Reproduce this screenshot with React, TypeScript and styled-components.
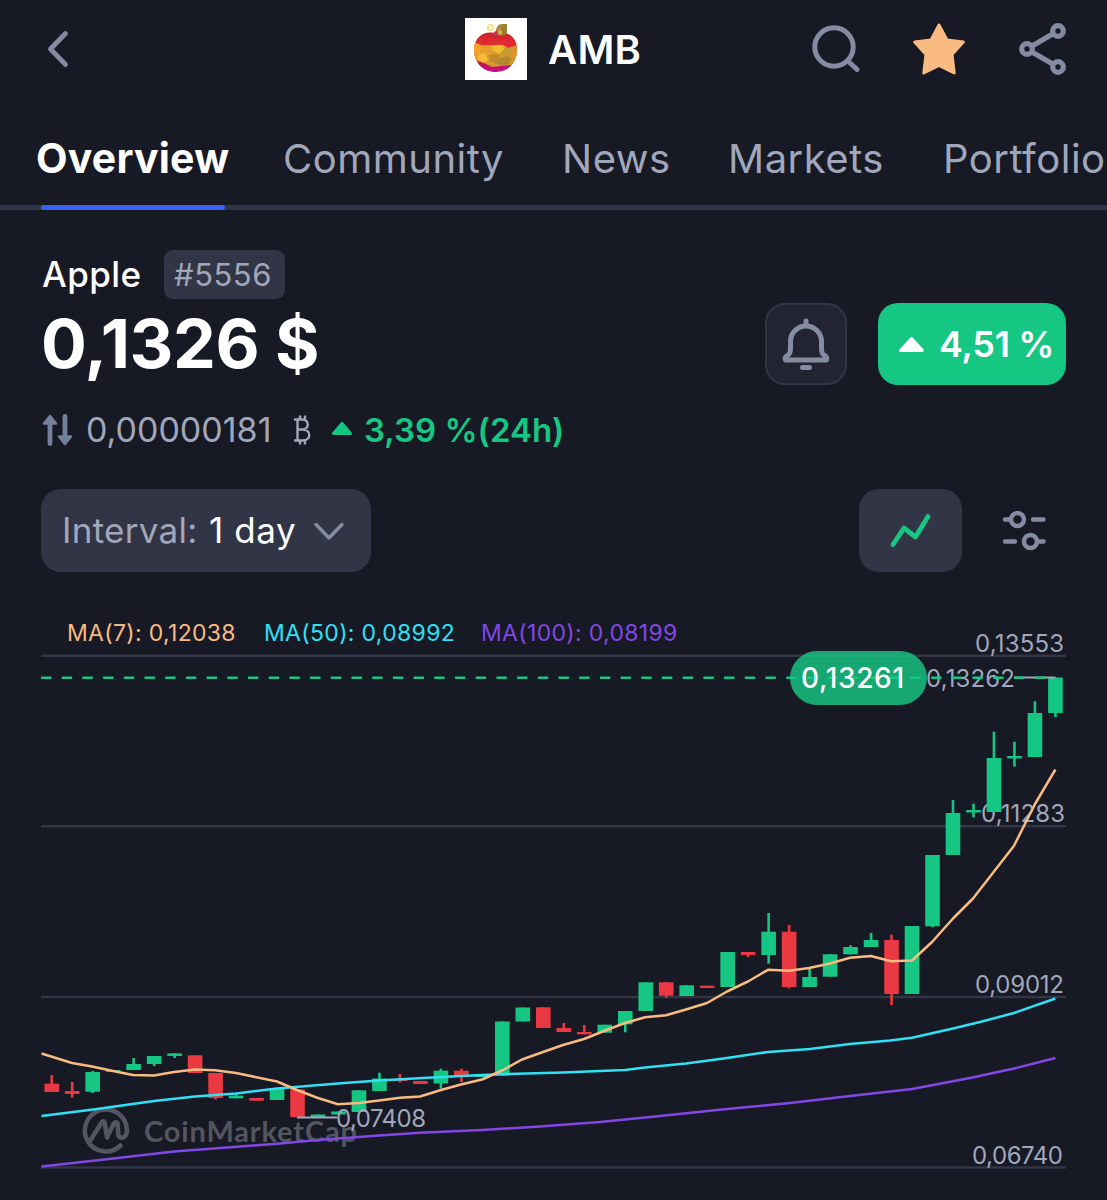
import React from "react";
import styled, { createGlobalStyle } from "styled-components";

const color = {
  bg: "#171924",
  panel: "#323546",
  line: "#323546",
  muted: "#a1a7bb",
  icon: "#858ca2",
  green: "#16c784",
  red: "#ea3943",
  blue: "#3861fb",
  orange: "#f9bb82",
  cyan: "#30e0f5",
  purple: "#8247e5",
};

const GlobalStyle = createGlobalStyle`
  * { box-sizing: border-box; }
  html, body { margin: 0; background: ${color.bg}; }
  body { overflow: hidden; font-family: Inter, "Liberation Sans", sans-serif; color: #fff; }
  svg { display: block; flex: none; overflow: visible; }
`;

const Screen = styled.main`
  width: 1107px;
  height: 1200px;
  overflow: hidden;
  display: flex;
  flex-direction: column;
  background: ${color.bg};
`;

const Header = styled.header`
  height: 98px;
  flex: none;
  display: flex;
  align-items: center;
  padding: 0 38px 0 44px;
`;

const Title = styled.div`
  display: flex;
  align-items: center;
  gap: 21px;
  margin-left: 395px;
`;

const Symbol = styled.span`
  padding-top: 2px;
  font-size: 40px;
  line-height: 48px;
  font-weight: 600;
  letter-spacing: 0.3px;
`;

const Actions = styled.div`
  display: flex;
  align-items: center;
  gap: 52px;
  margin-left: auto;
`;

const Tabs = styled.nav`
  height: 112px;
  flex: none;
  display: grid;
  grid-template-columns: 247px 279px 166px 215px 200px;
  padding-left: 36px;
  border-bottom: 5px solid ${color.line};
`;

const Tab = styled.a<{ $active?: boolean }>`
  position: relative;
  font-size: ${(p) => (p.$active ? 41 : 40)}px;
  line-height: 121px;
  height: 107px;
  white-space: nowrap;
  font-weight: ${(p) => (p.$active ? 700 : 400)};
  color: ${(p) => (p.$active ? "#fff" : color.muted)};
  letter-spacing: ${(p) => (p.$active ? 0.2 : 0.5)}px;
`;

const ActiveBar = styled.span`
  position: absolute;
  left: 5px;
  bottom: -5px;
  width: 184px;
  height: 5px;
  border-radius: 2.5px;
  background: ${color.blue};
`;

const Summary = styled.section`
  flex: none;
  padding: 40px 41px 0 42px;
`;

const NameRow = styled.div`
  display: flex;
  align-items: center;
  height: 49px;
`;

const Name = styled.h1`
  margin: 0;
  width: 122px;
  font-size: 35px;
  line-height: 49px;
  font-weight: 500;
  letter-spacing: 0.4px;
`;

const Rank = styled.span`
  width: 121px;
  height: 49px;
  padding-left: 10px;
  border-radius: 9px;
  background: ${color.panel};
  color: ${color.muted};
  font-size: 31px;
  line-height: 49px;
  letter-spacing: 0.5px;
`;

const PriceRow = styled.div`
  display: flex;
  align-items: center;
  height: 82px;
  margin-top: 4px;
`;

const Price = styled.div`
  flex: 1;
  margin-left: -1px;
  font-size: 68px;
  line-height: 80px;
  height: 82px;
  font-weight: 700;
  letter-spacing: -0.4px;
`;

const AlertButton = styled.button`
  width: 82px;
  height: 82px;
  padding: 0;
  display: grid;
  place-items: center;
  border: 2px solid ${color.panel};
  border-radius: 20px;
  background: #222531;
`;

const ChangePill = styled.div`
  width: 188px;
  height: 82px;
  margin-left: 31px;
  padding-left: 21px;
  display: flex;
  align-items: center;
  gap: 15px;
  border-radius: 20px;
  background: ${color.green};
  font-size: 36px;
  font-weight: 600;
  letter-spacing: -0.3px;
  white-space: nowrap;
`;

const BtcRow = styled.div`
  display: flex;
  align-items: center;
  height: 40px;
  margin-top: 25px;
  font-size: 34px;
  line-height: 40px;
  white-space: nowrap;
`;

const BtcValue = styled.span`
  width: 208px;
  margin-left: 13px;
  color: ${color.muted};
`;

const DayMarker = styled.span`
  margin-left: 21px;
  padding-bottom: 3px;
`;

const DayChange = styled.span`
  margin-left: 12px;
  color: ${color.green};
  font-size: 33px;
  font-weight: 600;
`;

const Controls = styled.section`
  flex: none;
  display: flex;
  align-items: center;
  height: 83px;
  margin-top: 39px;
  padding: 0 61px 0 41px;
`;

const IntervalSelect = styled.button`
  width: 330px;
  height: 83px;
  padding: 0 26px 0 21px;
  display: flex;
  align-items: center;
  border: 0;
  border-radius: 20px;
  background: ${color.panel};
  color: #fff;
  font: 400 35px/83px Inter, "Liberation Sans", sans-serif;
  white-space: nowrap;
`;

const IntervalLabel = styled.span`
  width: 147px;
  text-align: left;
  color: ${color.muted};
  letter-spacing: 0.3px;
`;

const IntervalValue = styled.span`
  flex: 1;
  text-align: left;
  letter-spacing: 0.6px;
`;

const ChartTypeButton = styled.button`
  width: 103px;
  height: 83px;
  margin-left: auto;
  padding: 0;
  display: grid;
  place-items: center;
  border: 0;
  border-radius: 20px;
  background: ${color.panel};
`;

const SettingsIcon = styled.svg`
  margin-left: 40px;
`;

const Legend = styled.div`
  flex: none;
  display: flex;
  gap: 28px;
  height: 24px;
  margin-top: 49px;
  padding-left: 67px;
  font-size: 23px;
  line-height: 25px;
  white-space: nowrap;
`;

const LegendItem = styled.span<{ $color: string; $width: number }>`
  width: ${(p) => p.$width}px;
  color: ${(p) => p.$color};
  letter-spacing: 0.32px;
`;

const AppleLogo = () => (
  <svg width="62" height="62" viewBox="0 0 62 62">
    <defs>
      <clipPath id="appleBody">
        <path d="M31 16C23 12 10 16 9 31C9 45 18 54 31 54C44 54 52 44 52 31C52 18 41 12 31 16Z" />
      </clipPath>
      <linearGradient id="appleSkin" x1="0" y1="0" x2="0" y2="1">
        <stop offset="0" stopColor="#c3202c" />
        <stop offset="0.3" stopColor="#e32b2e" />
        <stop offset="0.72" stopColor="#c5144b" />
        <stop offset="1" stopColor="#c50da0" />
      </linearGradient>
    </defs>
    <rect width="62" height="62" fill="#fff" />
    <g clipPath="url(#appleBody)">
      <rect x="8" y="12" width="46" height="44" fill="url(#appleSkin)" />
      <path d="M8 24Q17 29 29 27Q39 26 43 30L54 28V42L46 47L36 48L27 49L17 44L8 43Z" fill="#d99b27" />
      <path d="M8 24L16 27L17 34L11 42H8Z" fill="#f4a129" />
      <path d="M16 28L27 27L29 34L23 38L15 35Z" fill="#e4a02c" />
      <path d="M26 28L38 27L40 33L34 36L28 33Z" fill="#f0be2c" />
      <path d="M39 31L47 29L48 36L41 39L34 36Z" fill="#c99a31" />
      <path d="M15 35L21 36L23 42L18 45L12 40Z" fill="#f7bb38" />
      <path d="M24 37L33 36L36 41L31 46L25 43Z" fill="#c18b2c" />
      <path d="M35 40L42 38L47 41L44 46L36 48L31 45Z" fill="#b4882e" />
      <path d="M46 29L54 26V41L47 41Z" fill="#dc9430" />
    </g>
    <path d="M31 12Q32 6 37 6H42V16L36 18L30 16Z" fill="#99802e" />
    <path d="M31 12L37 6L35 17Z" fill="#b6923a" />
    <circle cx="25.5" cy="9.5" r="2.8" fill="#fff8c9" stroke="#f3df88" strokeWidth="1.4" />
    <path d="M28 15L32 12L34 17L30 19Z" fill="#bd3859" />
    <circle cx="35" cy="14.5" r="2" fill="#e0b63a" />
  </svg>
);

const StarIcon = () => (
  <svg width="52" height="52" viewBox="0 0 52 52">
    <path d="M26 2L34 17L50.3 19L39 31.5L41.2 50L26 42.5L10.800 50L13 31.5L1.700 19L18 17Z" fill={color.orange} stroke={color.orange} strokeWidth="3" strokeLinejoin="round" />
  </svg>
);

const UpTriangle = ({ w, h, fill }: { w: number; h: number; fill: string }) => (
  <svg width={w} height={h} viewBox={`0 0 ${w} ${h}`}>
    <path d={`M${w / 2} 1.5L${w - 1.5} ${h - 1.5}H1.5Z`} fill={fill} stroke={fill} strokeWidth="3" strokeLinejoin="round" />
  </svg>
);

type Candle = { up: boolean; top: number; bottom: number; high?: number; low?: number };
const c = (dir: "g" | "r", top: number, bottom: number, high?: number, low?: number): Candle => ({
  up: dir === "g", top, bottom, high, low,
});

const candles: Candle[] = [
  c("r", 1083.7, 1092, 1075), c("r", 1091, 1094, 1082, 1097.5), c("g", 1072, 1091.7, 1071, 1093),
  c("g", 1070, 1071.8), c("g", 1064, 1070, 1058), c("g", 1056, 1064, 1056, 1066),
  c("g", 1053.3, 1056, 1053.3, 1058), c("r", 1055.3, 1073), c("r", 1073, 1098, 1073, 1099.5),
  c("g", 1095.7, 1098.3, 1094.5), c("r", 1098, 1100.7), c("g", 1088, 1100), c("r", 1089.3, 1117),
  c("g", 1114.5, 1117), c("g", 1111.5, 1114.5), c("g", 1090.3, 1112), c("g", 1078.5, 1091, 1072.7),
  c("r", 1079, 1081, 1074, 1082.5), c("r", 1081, 1084), c("g", 1070.7, 1083.5, 1068.7, 1088.5),
  c("r", 1070.7, 1077, 1068.7, 1082), c("g", 1074.5, 1077), c("g", 1021.5, 1075.5),
  c("g", 1007.5, 1021.5), c("r", 1007.3, 1028), c("r", 1028, 1032, 1023), c("r", 1032, 1034.3, 1025),
  c("g", 1024.7, 1032.7), c("g", 1011, 1024.3, 1011, 1032.3), c("g", 982.3, 1011),
  c("r", 982.3, 995.7, 982.3, 997.7), c("g", 985.3, 996), c("r", 985.7, 988), c("g", 952, 987),
  c("r", 952, 955, 952, 957), c("g", 931.7, 955, 913, 963.7), c("r", 931.7, 987, 925, 988.3),
  c("g", 977, 987, 969), c("g", 954.3, 976.7), c("g", 947, 954.3, 945.3), c("g", 940, 947, 933),
  c("r", 940, 994, 934.7, 1005), c("g", 926, 994), c("g", 855, 926.3, 855, 927.3),
  c("g", 813, 855, 800), c("g", 810, 812.5, 803.7, 817.3), c("g", 758, 812, 731.7),
  c("g", 756, 758.5, 741.7, 766.7), c("g", 713, 757, 701.3), c("g", 677.5, 713, 677.5, 717),
];

const ma7 = "41.5,1053.5 72,1063 92,1066.5 113,1071 133,1075 154,1075.5 174,1072 195,1069.5 215,1070.3 236,1073 277,1081.5 297,1090 318,1098 338,1104.3 359,1103 379,1100.5 400,1097.7 420,1096.5 441,1090 461,1084.5 482,1079.5 502,1070.5 522,1059.5 543,1052 563,1045 584,1039 604,1031 625,1023 645,1017.3 666,1015.3 686,1009.5 707,1003 727,991.5 748,981.5 768,969.8 789,970.7 809,968 830,963.5 850,957.8 871,956 891,961.3 912,960.5 932,942 953,918.5 973,898.5 994,871.5 1014,845.7 1035,804 1055.4,769.5";
const ma50 = "41.5,1116 97,1109 154,1101 195,1096.5 236,1093.5 277,1088.5 338,1083.5 379,1080.5 441,1077 482,1075 502,1074.3 563,1072.5 625,1070 645,1067.5 686,1063.5 727,1058 768,1052 810,1049 850,1044 890,1040.5 912,1037.7 953,1028.5 980,1022 1014,1013 1055.4,998.5";
const ma100 = "41.5,1166.5 100,1160 174,1151.5 240,1146.5 277,1143.7 318,1140 379,1135.5 420,1132.8 482,1130 540,1126.5 600,1122 660,1116 727,1109 790,1103 850,1096 912,1089 970,1078 1014,1068.5 1055.4,1058";

const grid = [
  { y: 655.7, label: "0,13553", x: 975, w: 89 },
  { y: 826.3, label: "0,11283", x: 981, w: 84 },
  { y: 997, label: "0,09012", x: 975, w: 89 },
  { y: 1167.5, label: "0,06740", x: 972, w: 91 },
];

const ChartSvg = styled.svg`
  font-family: Inter, "Liberation Sans", sans-serif;
  font-size: 24px;
`;

const Chart = () => (
  <ChartSvg width="1107" height="555" viewBox="0 645 1107 555">
    {grid.map((g) => (
      <g key={g.label}>
        <line x1="41" x2="1066" y1={g.y} y2={g.y} stroke={color.line} strokeWidth="2.5" />
        <text x={g.x} y={g.y - 4} textLength={g.w} fill={color.muted}>{g.label}</text>
      </g>
    ))}
    <g stroke="#535661" strokeWidth="4.6" fill="none" strokeLinecap="round" strokeLinejoin="round">
      <path d="M120.500 1145.500A21 21 0 1 1 126.800 1129C127.500 1139 118.500 1140 118.200 1134L117.800 1125C117.500 1121.500 115 1121.500 113.500 1124L107 1137.500L104.800 1123C104.200 1120.800 102.600 1120.800 101.500 1122.600L90 1141" />
    </g>
    <text x="144" y="1141.500" textLength="213" fill="#535661" fontFamily="Lato" fontWeight="700" fontSize="29">CoinMarketCap</text>
    {candles.map((k, i) => {
      const x = 51.7 + i * 20.484;
      const fill = k.up ? color.green : color.red;
      const high = k.high ?? k.top;
      const low = k.low ?? k.bottom;
      return (
        <g key={i} fill={fill}>
          <rect x={x - 7.3} y={k.top} width="14.6" height={k.bottom - k.top} />
          <rect x={x - 1.3} y={high} width="2.6" height={low - high} />
        </g>
      );
    })}
    <g fill="none" strokeWidth="2.5" strokeLinejoin="round">
      <polyline points={ma100} stroke={color.purple} />
      <polyline points={ma50} stroke={color.cyan} />
      <polyline points={ma7} stroke={color.orange} />
    </g>
    <line x1="297" x2="337" y1="1117.500" y2="1117.500" stroke={color.muted} strokeWidth="2.2" />
    <text x="336" y="1126.700" textLength="90" fill={color.muted}>0,07408</text>
    <text x="926" y="687.300" textLength="89" fill={color.muted}>0,13262</text>
    <line x1="1014" x2="1055.400" y1="677.500" y2="677.500" stroke={color.muted} strokeWidth="2.2" />
    <line x1="41" x2="1046" y1="677.700" y2="677.700" stroke={color.green} strokeWidth="2.5" strokeDasharray="10.350 10.350" />
    <rect x="790" y="651" width="137" height="54" rx="27" fill={color.green} fillOpacity="0.82" />
    <text x="801" y="687.500" textLength="103" fontSize="28" fontWeight="500" fill="#fff">0,13261</text>
  </ChartSvg>
);

export default function App() {
  return (
    <Screen>
      <GlobalStyle />
      <Header>
        <svg width="26" height="40" viewBox="0 0 26 40" fill="none" stroke={color.icon} strokeWidth="4.800" strokeLinecap="round" strokeLinejoin="round">
          <path d="M21.500 4.500L6.500 20L21.500 35.500" />
        </svg>
        <Title>
          <AppleLogo />
          <Symbol>AMB</Symbol>
        </Title>
        <Actions>
          <svg width="50" height="50" viewBox="0 0 50 50" fill="none" stroke={color.icon} strokeWidth="5" strokeLinecap="round">
            <circle cx="23" cy="23" r="19.200" />
            <path d="M37.500 37.500L46 45.500" />
          </svg>
          <StarIcon />
          <svg width="52" height="54" viewBox="0 0 52 54" fill="none" stroke={color.icon} strokeWidth="5.200">
            <path d="M15 24L36.500 11.500M15 30L36.500 42.500" />
            <circle cx="10" cy="27" r="5.300" />
            <circle cx="41" cy="9" r="5.300" />
            <circle cx="41" cy="45" r="5.300" />
          </svg>
        </Actions>
      </Header>
      <Tabs>
        <Tab $active>Overview<ActiveBar /></Tab>
        <Tab>Community</Tab>
        <Tab>News</Tab>
        <Tab>Markets</Tab>
        <Tab>Portfolio</Tab>
      </Tabs>
      <Summary>
        <NameRow>
          <Name>Apple</Name>
          <Rank>#5556</Rank>
        </NameRow>
        <PriceRow>
          <Price>0,1326 $</Price>
          <AlertButton aria-label="Price alert">
            <svg width="50" height="54" viewBox="0 0 50 54" fill="none" stroke={color.icon} strokeWidth="5" strokeLinecap="round" strokeLinejoin="round">
              <path d="M25 4V9M9.500 24.500A15.500 15.500 0 0 1 40.500 24.500V31.500C40.500 36.500 42 37.500 44.500 39C46 40 46 41 45.500 43H4.500C4 41 4 40 5.500 39C8 37.500 9.500 36.500 9.500 31.500ZM21.500 50.500H28.500" />
            </svg>
          </AlertButton>
          <ChangePill>
            <UpTriangle w={25} h={15} fill="#fff" />
            <span>4,51 %</span>
          </ChangePill>
        </PriceRow>
        <BtcRow>
          <svg width="31" height="32" viewBox="0 0 31 32" fill="#74819a" stroke="#74819a" strokeLinejoin="round" strokeLinecap="round">
            <path d="M8 2L14 9.500H2Z" strokeWidth="2.500" />
            <path d="M8 5V29.500M23 2.500V25" strokeWidth="4.800" />
            <path d="M23 30L29 22.500H17Z" strokeWidth="2.500" />
          </svg>
          <BtcValue>0,00000181</BtcValue>
          <svg width="17" height="32" viewBox="0 0 17 32" fill="none" stroke={color.muted} strokeWidth="2.400">
            <path d="M0 5.500H8.500C15.500 5.500 15.500 15.500 8.500 15.500H3M8.500 15.500C17.500 15.500 17.500 26.500 8.500 26.500H0M3.500 5.500V26.500M6 1.500V5.500M11 1.500V6M6 26.500V30.500M11 26V30.500" />
          </svg>
          <DayMarker>
            <UpTriangle w={20} h={13} fill={color.green} />
          </DayMarker>
          <DayChange>3,39 %(24h)</DayChange>
        </BtcRow>
      </Summary>
      <Controls>
        <IntervalSelect>
          <IntervalLabel>Interval:</IntervalLabel>
          <IntervalValue>1 day</IntervalValue>
          <svg width="32" height="20" viewBox="0 0 32 20" fill="none" stroke={color.icon} strokeWidth="3.500" strokeLinecap="round" strokeLinejoin="round">
            <path d="M3 3.500L16 17L29 3.500" />
          </svg>
        </IntervalSelect>
        <ChartTypeButton aria-label="Chart type">
          <svg width="42" height="36" viewBox="0 0 42 36" fill="none" stroke={color.green} strokeWidth="4.800" strokeLinecap="round" strokeLinejoin="round">
            <path d="M3 31.500L14 15L25.500 24L38 3.500" />
          </svg>
        </ChartTypeButton>
        <SettingsIcon width="44" height="40" viewBox="0 0 44 40" fill="none" stroke={color.icon} strokeWidth="4.400" strokeLinecap="round">
          <circle cx="15.500" cy="8.500" r="6.500" />
          <circle cx="28.500" cy="30.500" r="6.500" />
          <path d="M3 8.500H8M31 8.500H41.500M3 30.500H13M36 30.500H41.500" />
        </SettingsIcon>
      </Controls>
      <Legend>
        <LegendItem $color={color.orange} $width={169}>MA(7): 0,12038</LegendItem>
        <LegendItem $color={color.cyan} $width={189}>MA(50): 0,08992</LegendItem>
        <LegendItem $color={color.purple} $width={198}>MA(100): 0,08199</LegendItem>
      </Legend>
      <Chart />
    </Screen>
  );
}
